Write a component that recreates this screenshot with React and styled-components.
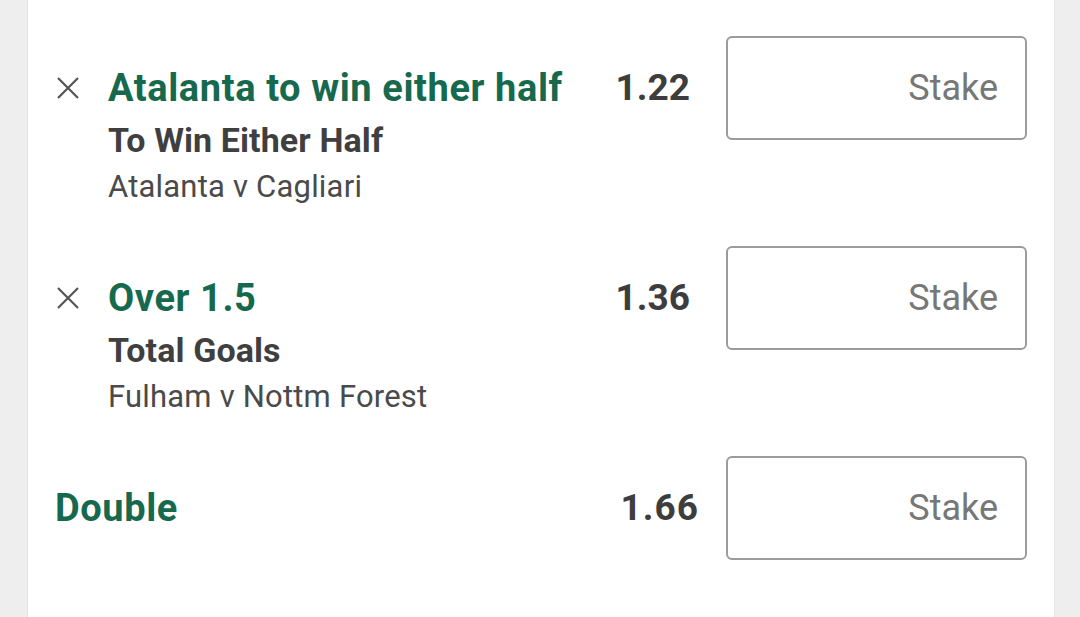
import React from 'react';
import styled, { createGlobalStyle } from 'styled-components';

const GlobalStyle = createGlobalStyle`
  html, body {
    margin: 0;
    background: #eeeeee;
    font-family: Roboto, "Liberation Sans", sans-serif;
  }
`;

const Page = styled.div`
  padding: 0 25px 0 27px;
  height: 617px;
  overflow: hidden;
`;

const Card = styled.div`
  background: #fff;
  border-left: 1px solid #e3e3e3;
  border-right: 1px solid #e3e3e3;
  height: 100%;
  box-sizing: border-box;
  padding: 36px 27px 0 27px;
  display: flex;
  flex-direction: column;
  gap: 39px;
`;

const Row = styled.div`
  display: flex;
  align-items: flex-start;
`;

const RemoveButton = styled.button`
  width: 53px;
  flex: none;
  margin-top: 41px;
  padding: 0 0 0 2px;
  border: none;
  background: none;
  text-align: left;
  cursor: pointer;
  svg {
    display: block;
  }
`;

const Info = styled.div`
  flex: 1;
  margin-top: ${(p) => (p.$single ? '0' : '30px')};
  ${(p) => p.$single && 'height: 103px; display: flex; align-items: center;'}
`;

const Title = styled.div`
  color: #17694e;
  font-size: 38px;
  font-weight: 700;
  letter-spacing: 0.6px;
  line-height: 44px;
`;

const Market = styled.div`
  color: #3f3f3f;
  font-size: 34px;
  font-weight: 700;
  letter-spacing: 0.1px;
  line-height: 42px;
  margin-top: 9px;
`;

const Event = styled.div`
  color: #4a4a4a;
  font-size: 31px;
  letter-spacing: 0.2px;
  line-height: 40px;
  margin-top: 6px;
`;

const Odds = styled.div`
  flex: none;
  height: 103px;
  display: flex;
  align-items: center;
  margin-right: ${(p) => p.$gap}px;
  color: #3d3d3d;
  font-size: 37px;
  font-weight: 700;
  letter-spacing: ${(p) => p.$spacing || 0}px;
`;

const StakeInput = styled.input`
  flex: none;
  width: 301px;
  height: 104px;
  box-sizing: border-box;
  border: 2px solid #9b9b9b;
  border-radius: 6px;
  padding: 0 27px 0 12px;
  text-align: right;
  font-family: Roboto, "Liberation Sans", sans-serif;
  font-size: 36px;
  color: #3d3d3d;
  outline: none;
  &::placeholder {
    color: #777;
  }
`;

const CloseIcon = () => (
  <svg width="22" height="22" viewBox="0 0 22 22">
    <path d="M1 1 L21 21 M21 1 L1 21" stroke="#555" strokeWidth="2.2" />
  </svg>
);

const bets = [
  { title: 'Atalanta to win either half', market: 'To Win Either Half', event: 'Atalanta v Cagliari', odds: '1.22' },
  { title: 'Over 1.5', market: 'Total Goals', event: 'Fulham v Nottm Forest', odds: '1.36' },
];

const App = () => (
  <>
    <GlobalStyle />
    <Page>
      <Card>
        {bets.map((b) => (
          <Row key={b.title}>
            <RemoveButton aria-label="Remove">
              <CloseIcon />
            </RemoveButton>
            <Info>
              <Title>{b.title}</Title>
              <Market>{b.market}</Market>
              <Event>{b.event}</Event>
            </Info>
            <Odds $gap={36}>{b.odds}</Odds>
            <StakeInput placeholder="Stake" />
          </Row>
        ))}
        <Row>
          <Info $single>
            <Title>Double</Title>
          </Info>
          <Odds $gap={27} $spacing={1}>1.66</Odds>
          <StakeInput placeholder="Stake" />
        </Row>
      </Card>
    </Page>
  </>
);

export default App;
